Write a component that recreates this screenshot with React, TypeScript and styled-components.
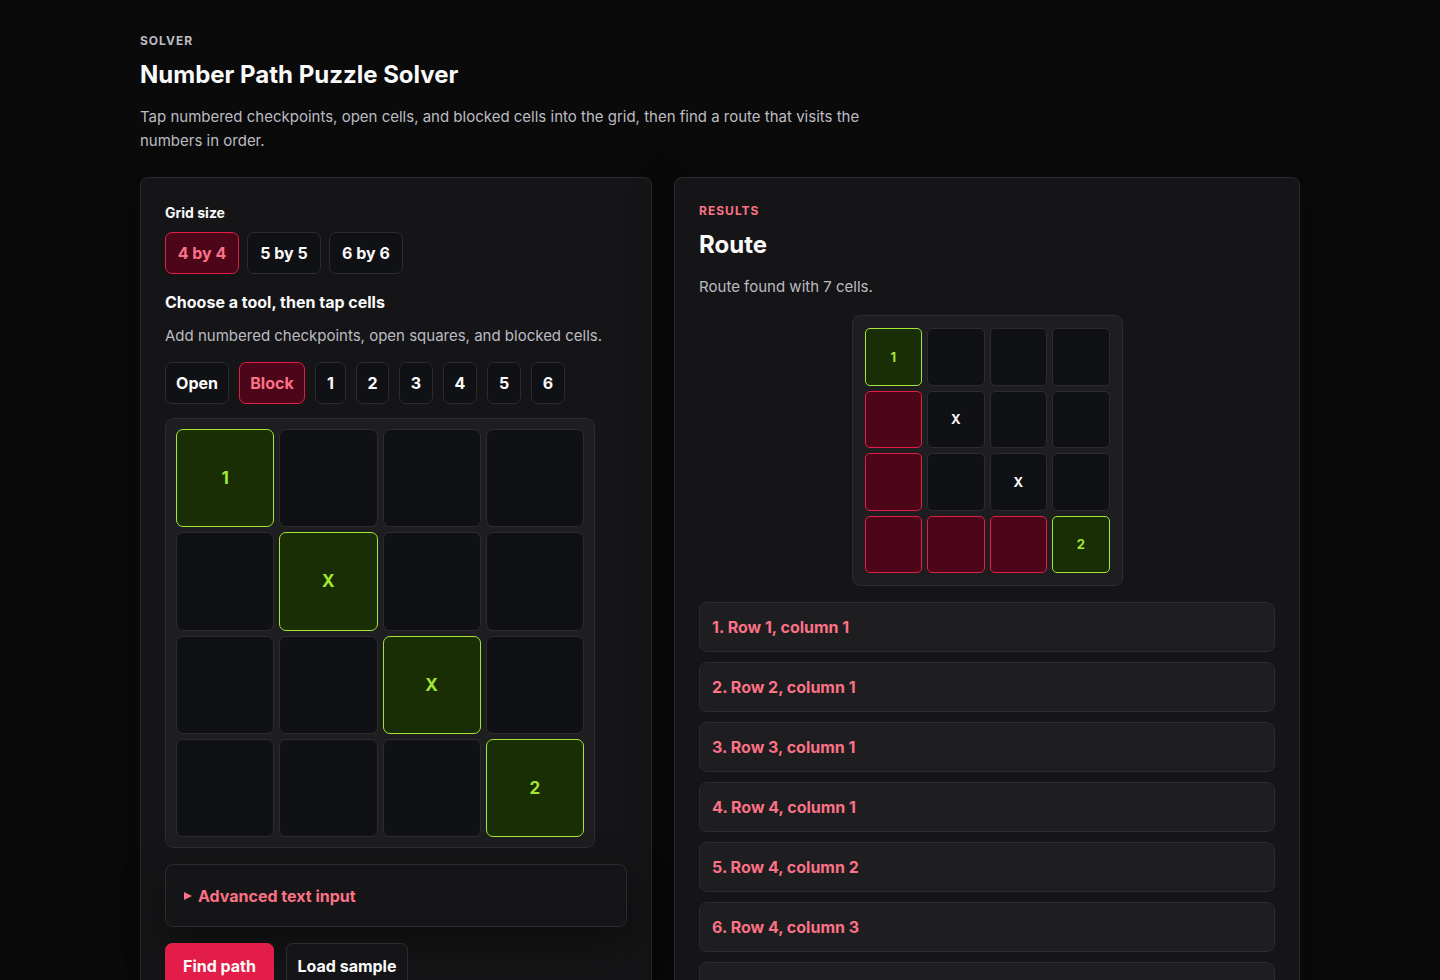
import React, { useState } from "react";
import styled, { createGlobalStyle, css } from "styled-components";

const color = {
  page: "#0a0a0a",
  panel: "#151517",
  raised: "#1e1e20",
  well: "#101115",
  line: "#2c2c30",
  text: "#fafafa",
  muted: "#bcbcc2",
  accent: "#e11d48",
  accentText: "#fb7185",
  accentDeep: "#4c0519",
  lime: "#a3e635",
  limeDeep: "#1a2e05",
};

const GlobalStyle = createGlobalStyle`
  *, *::before, *::after { box-sizing: border-box; }
  body {
    margin: 0;
    background: ${color.page};
    color: ${color.text};
    font-family: Inter, "Liberation Sans", sans-serif;
    font-size: 16px;
    line-height: 24px;
  }
  button { font: inherit; color: inherit; cursor: pointer; }
`;

const Page = styled.main`
  max-width: 1208px;
  margin: 0 auto;
  padding: 32px 24px;
`;

const Header = styled.header`
  max-width: 740px;
  margin-bottom: 24px;
`;

const Eyebrow = styled.p<{ $accent?: boolean }>`
  margin: 0 0 8px;
  font-size: 12px;
  line-height: 18px;
  font-weight: 700;
  letter-spacing: 1px;
  text-transform: uppercase;
  color: ${(p) => (p.$accent ? color.accentText : color.muted)};
`;

const titleText = css`
  margin: 0 0 13px;
  font-size: 24px;
  line-height: 34px;
  font-weight: 700;
`;

const PageTitle = styled.h1`
  ${titleText}
`;

const ResultTitle = styled.h2`
  ${titleText}
`;

const Copy = styled.p`
  margin: 0;
  font-size: 15px;
  color: ${color.muted};
`;

const Columns = styled.div`
  display: grid;
  grid-template-columns: minmax(0, 9fr) minmax(0, 11fr);
  gap: 22px;
  align-items: start;

  @media (max-width: 860px) {
    grid-template-columns: minmax(0, 1fr);
  }
`;

const Panel = styled.section`
  padding: 24px;
  border: 1px solid ${color.line};
  border-radius: 8px;
  background: ${color.panel};
  box-shadow: 0 18px 45px rgba(0, 0, 0, 0.4);
`;

const FieldLabel = styled.h3`
  margin: 0 0 8px;
  font-size: 14px;
  line-height: 22px;
  font-weight: 700;
`;

const ToolHeading = styled.h3`
  margin: 16px 0 10px;
  font-size: 16px;
  line-height: 24px;
  font-weight: 700;
`;

const ButtonRow = styled.div<{ $gap: number }>`
  display: flex;
  flex-wrap: wrap;
  gap: ${(p) => p.$gap}px;
`;

const Tools = styled(ButtonRow)`
  margin: 14px 0;
`;

const Choice = styled.button<{ $active: boolean; $width: number }>`
  min-width: ${(p) => p.$width}px;
  height: 42px;
  padding: 0 8px;
  border: 1px solid ${(p) => (p.$active ? color.accent : color.line)};
  border-radius: 7px;
  background: ${(p) => (p.$active ? color.accentDeep : color.well)};
  color: ${(p) => (p.$active ? color.accentText : color.text)};
  font-weight: 700;
`;

const board = css`
  display: grid;
  grid-template-columns: repeat(4, minmax(0, 1fr));
  gap: 5px;
  width: 100%;
  border: 1px solid ${color.line};
  border-radius: 8px;
  background: ${color.raised};
`;

const EditBoard = styled.div`
  ${board}
  max-width: 430px;
  padding: 10px;
`;

const RouteBoard = styled.div`
  ${board}
  max-width: 271px;
  margin: 16px auto;
  padding: 12px;
`;

type Tone = "plain" | "marked" | "path";

const tones = {
  plain: css`
    border-color: ${color.line};
    background: ${color.well};
    color: ${color.text};
  `,
  marked: css`
    border-color: ${color.lime};
    background: ${color.limeDeep};
    color: ${color.lime};
  `,
  path: css`
    border-color: ${color.accent};
    background: ${color.accentDeep};
    color: ${color.accentText};
  `,
};

const EditCell = styled.button<{ $tone: Tone }>`
  aspect-ratio: 1;
  padding: 0;
  border: 1px solid;
  border-radius: 7px;
  font-size: 17px;
  font-weight: 700;
  ${(p) => tones[p.$tone]}
`;

const RouteCell = styled.div<{ $tone: Tone }>`
  display: grid;
  place-items: center;
  aspect-ratio: 1;
  border: 1px solid;
  border-radius: 5px;
  font-size: 13px;
  line-height: 20px;
  font-weight: 700;
  ${(p) => tones[p.$tone]}
`;

const Advanced = styled.details`
  margin: 16px 0;
  padding: 19px 18px 18px;
  border: 1px solid ${color.line};
  border-radius: 8px;
  background: ${color.panel};
  box-shadow: 0 18px 45px rgba(0, 0, 0, 0.4);
`;

const Summary = styled.summary`
  display: flex;
  align-items: center;
  gap: 6px;
  color: ${color.accentText};
  font-weight: 700;
  cursor: pointer;

  &::before {
    content: "";
    border: 4px solid transparent;
    border-left: 8px solid currentColor;
    border-right: 0;
  }

  details[open] > &::before {
    transform: rotate(90deg);
  }
`;

const MapInput = styled.textarea`
  display: block;
  width: 100%;
  margin-top: 12px;
  padding: 10px;
  border: 1px solid ${color.line};
  border-radius: 7px;
  background: ${color.well};
  color: ${color.text};
  font: inherit;
`;

const Action = styled.button<{ $primary?: boolean; $width: number }>`
  min-width: ${(p) => p.$width}px;
  height: 46px;
  padding: 0 8px;
  border: 1px solid ${(p) => (p.$primary ? color.accent : color.line)};
  border-radius: 7px;
  background: ${(p) => (p.$primary ? color.accent : color.panel)};
  font-weight: 700;
`;

const Steps = styled.ol`
  display: grid;
  gap: 10px;
  margin: 0;
  padding: 0;
  list-style: none;
`;

const Step = styled.li`
  padding: 12px;
  border: 1px solid ${color.line};
  border-radius: 8px;
  background: ${color.raised};
  color: ${color.accentText};
  font-weight: 700;
`;

const sizes = ["4 by 4", "5 by 5", "6 by 6"];
const tools: [string, number][] = [
  ["Open", 64],
  ["Block", 66],
  ["1", 31],
  ["2", 33],
  ["3", 34],
  ["4", 34],
  ["5", 34],
  ["6", 34],
];
const sample = ["1", "", "", "", "", "X", "", "", "", "", "X", "", "", "", "", "2"];
const route = [0, 4, 8, 12, 13, 14, 15];

const rowOf = (i: number) => Math.floor(i / 4) + 1;
const columnOf = (i: number) => (i % 4) + 1;

function routeTone(index: number): Tone {
  if (/\d/.test(sample[index])) return "marked";
  return route.includes(index) ? "path" : "plain";
}

export default function App() {
  const [size, setSize] = useState(sizes[0]);
  const [tool, setTool] = useState("Block");
  const [cells, setCells] = useState(sample);

  const paint = (index: number) =>
    setCells(cells.map((c, i) => (i === index ? (tool === "Open" ? "" : tool === "Block" ? "X" : tool) : c)));

  return (
    <>
      <GlobalStyle />
      <Page>
        <Header>
          <Eyebrow>Solver</Eyebrow>
          <PageTitle>Number Path Puzzle Solver</PageTitle>
          <Copy>
            Tap numbered checkpoints, open cells, and blocked cells into the grid, then find a route that visits the
            numbers in order.
          </Copy>
        </Header>
        <Columns>
          <Panel aria-label="Puzzle">
            <FieldLabel id="grid-size">Grid size</FieldLabel>
            <ButtonRow $gap={8} role="group" aria-labelledby="grid-size">
              {sizes.map((s) => (
                <Choice key={s} type="button" $width={74} $active={s === size} aria-pressed={s === size} onClick={() => setSize(s)}>
                  {s}
                </Choice>
              ))}
            </ButtonRow>
            <ToolHeading id="tool">Choose a tool, then tap cells</ToolHeading>
            <Copy>Add numbered checkpoints, open squares, and blocked cells.</Copy>
            <Tools $gap={10} role="group" aria-labelledby="tool">
              {tools.map(([name, width]) => (
                <Choice key={name} type="button" $width={width} $active={name === tool} aria-pressed={name === tool} onClick={() => setTool(name)}>
                  {name}
                </Choice>
              ))}
            </Tools>
            <EditBoard>
              {cells.map((c, i) => (
                <EditCell key={i} type="button" $tone={c ? "marked" : "plain"} aria-label={`Row ${rowOf(i)}, column ${columnOf(i)}`} onClick={() => paint(i)}>
                  {c}
                </EditCell>
              ))}
            </EditBoard>
            <Advanced>
              <Summary>Advanced text input</Summary>
              <MapInput aria-label="Grid as text" rows={4} />
            </Advanced>
            <ButtonRow $gap={12}>
              <Action type="button" $primary $width={109}>
                Find path
              </Action>
              <Action type="button" $width={122} onClick={() => setCells(sample)}>
                Load sample
              </Action>
            </ButtonRow>
          </Panel>
          <Panel aria-label="Results">
            <Eyebrow $accent>Results</Eyebrow>
            <ResultTitle>Route</ResultTitle>
            <Copy>Route found with 7 cells.</Copy>
            <RouteBoard>
              {sample.map((c, i) => (
                <RouteCell key={i} $tone={routeTone(i)}>
                  {c}
                </RouteCell>
              ))}
            </RouteBoard>
            <Steps>
              {route.map((cell, i) => (
                <Step key={cell}>{`${i + 1}. Row ${rowOf(cell)}, column ${columnOf(cell)}`}</Step>
              ))}
            </Steps>
          </Panel>
        </Columns>
      </Page>
    </>
  );
}
